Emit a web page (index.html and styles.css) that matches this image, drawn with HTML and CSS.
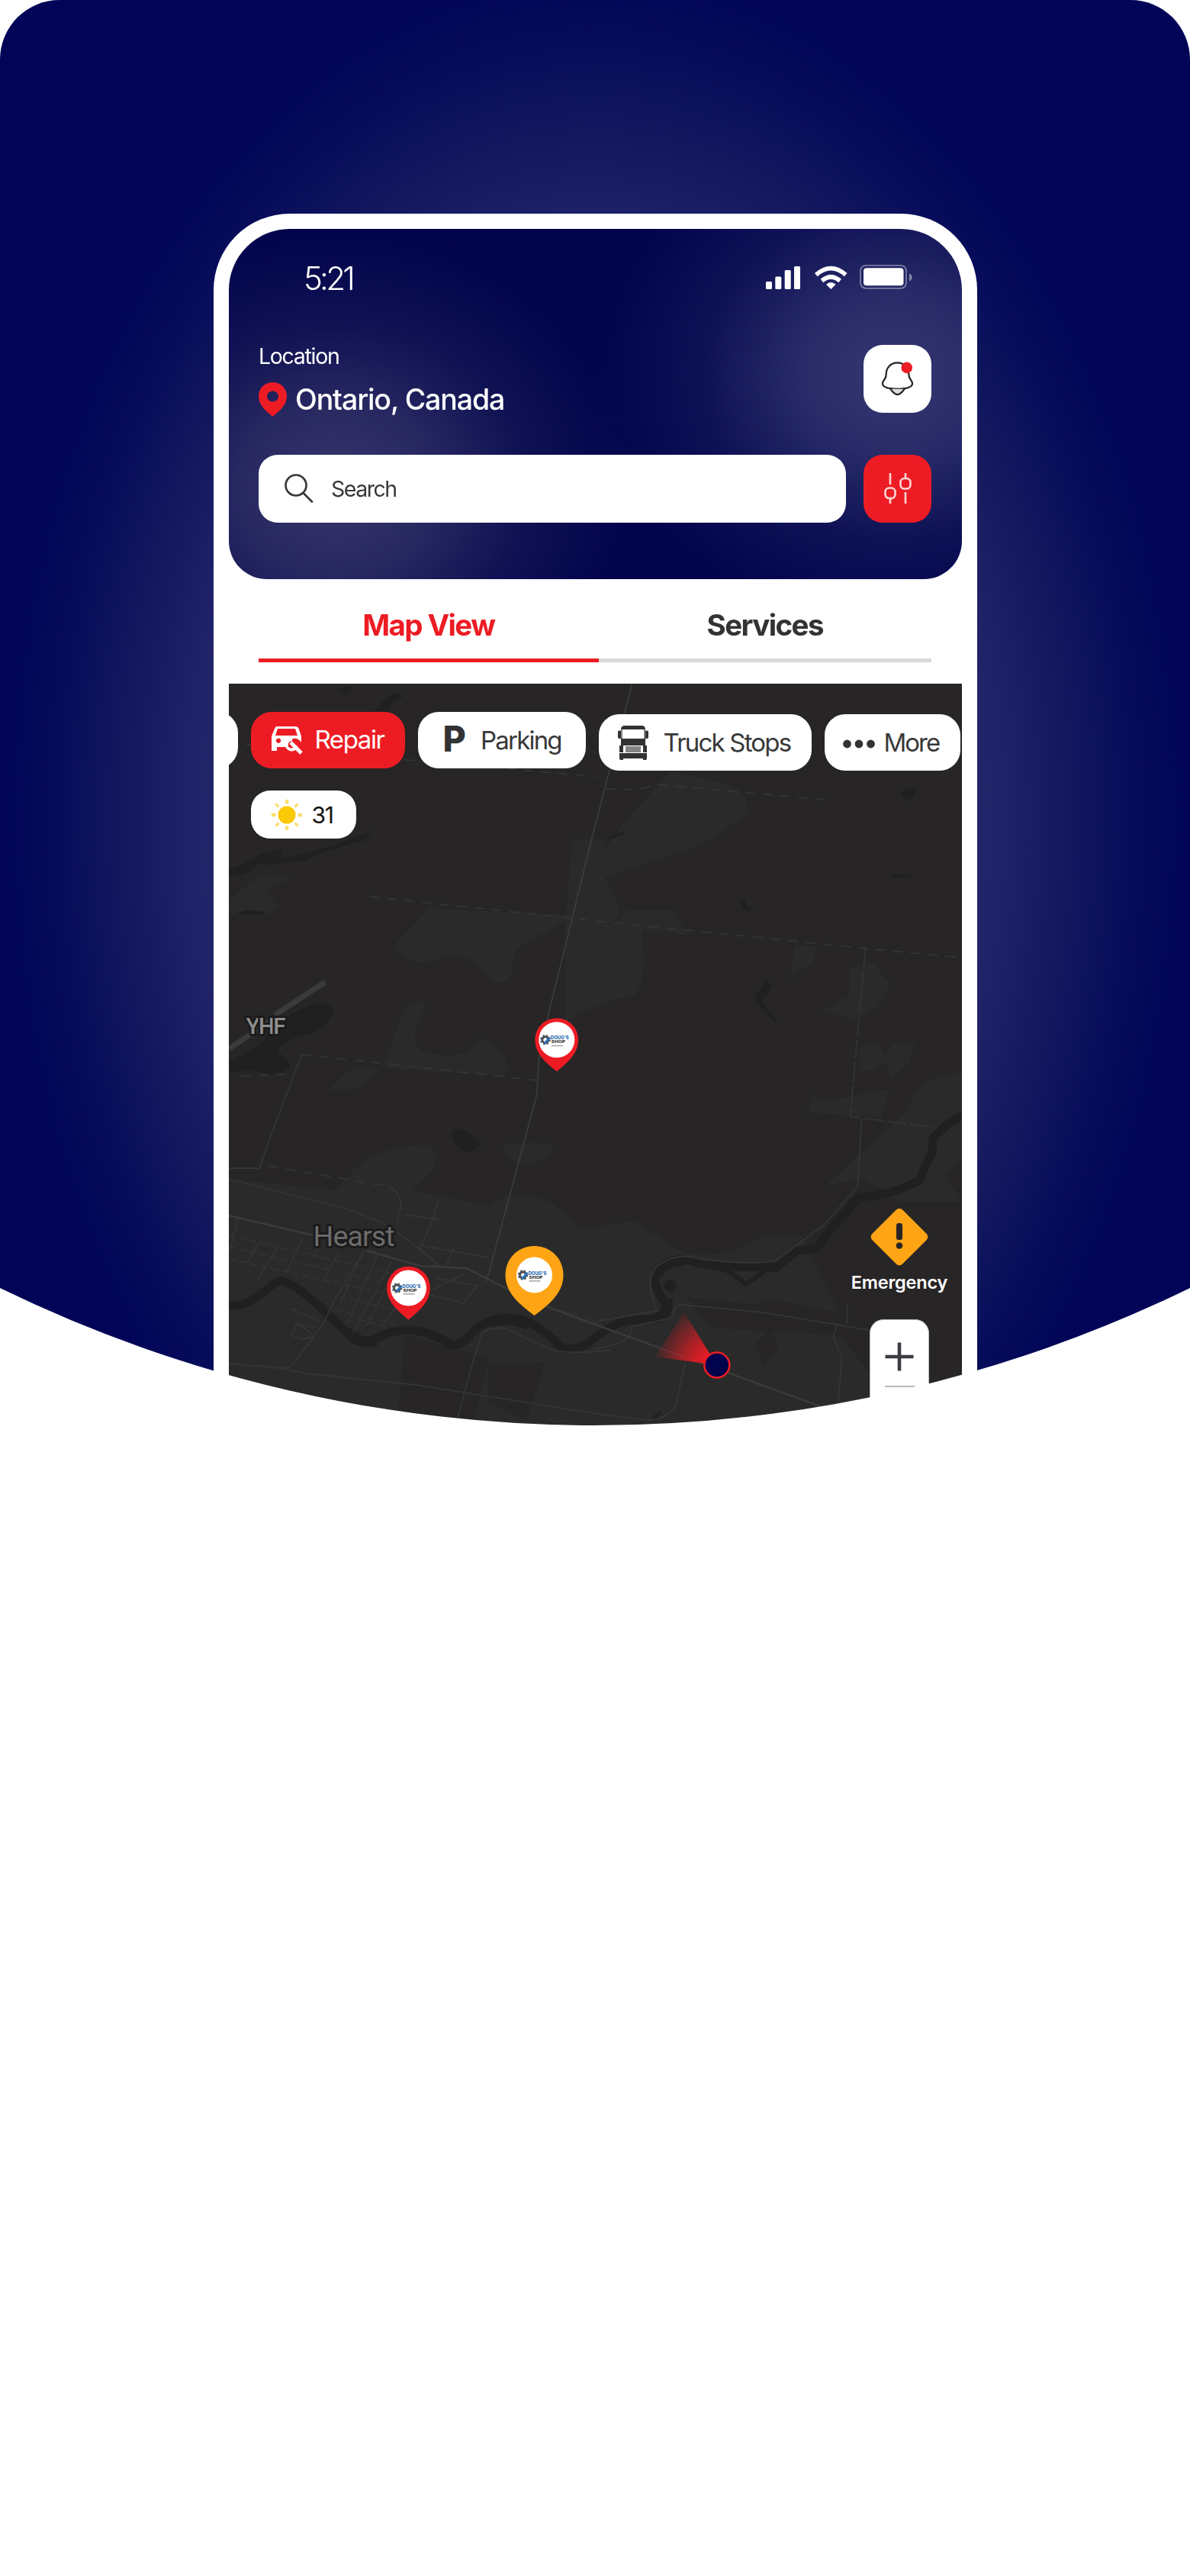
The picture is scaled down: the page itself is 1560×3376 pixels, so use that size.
FILE: index.html
```html
<!DOCTYPE html>
<html lang="en">
<head>
<meta charset="utf-8">
<title>Roadside Map</title>
<link rel="stylesheet" href="styles.css">
</head>
<body>
<main class="hero">
  <section class="phone">
    <div class="screen">
      <header class="header">
        <div class="status">
          <span class="clock">5:21</span>
          <svg class="status-icons" viewBox="1000 340 200 45" fill="#fff">
            <rect x="1004" y="369" width="8" height="10" rx="1.5"/>
            <rect x="1016.3" y="362.5" width="8" height="16.5" rx="1.5"/>
            <rect x="1028.7" y="354" width="8" height="25" rx="1.5"/>
            <rect x="1041" y="349" width="8" height="30" rx="1.5"/>
            <g fill="none" stroke="#fff" stroke-width="5.6">
              <path d="M1069.800 360.200Q1089.300 343.200 1108.700 360.200"/>
              <path d="M1077.400 368Q1089.300 358 1101.200 368"/>
            </g>
            <path d="M1089.300 379l-6.300-6.300q6.300-5.500 12.600 0z"/>
            <rect x="1128" y="347.800" width="60" height="30" rx="7" fill="none" stroke="#fff" stroke-opacity=".4" stroke-width="1.800"/>
            <rect x="1132" y="351.300" width="52.500" height="23" rx="4"/>
            <path d="M1192 358.500q3.600 1.500 3.600 5t-3.600 5z" fill-opacity=".45"/>
          </svg>
        </div>
        <div class="place-row">
          <div class="place">
            <span class="place-label">Location</span>
            <div class="place-name">
              <svg class="pin-icon" viewBox="0 0 37 45"><path fill="#ed1c24" fill-rule="evenodd" d="M18.500 0C8 0 0 8 0 18.500C0 29 8 36.500 18.500 45C29 36.500 37 29 37 18.500C37 8 29 0 18.500 0ZM18.500 11.500a7.500 7 0 1 1 0 14a7.500 7 0 1 1 0-14Z"/></svg>
              <span>Ontario, Canada</span>
            </div>
          </div>
          <button class="square bell" aria-label="Notifications">
            <svg viewBox="0 0 44 46" fill="none" stroke="#222" stroke-width="2.300">
              <path d="M22 1.500C13 1.500 6.800 8 6.800 17C6.800 25 2 24 2 29.500C2 35.500 12 36.500 22 36.500S42 35.500 42 29.500C42 24 37.200 25 37.200 17C37.200 8 31 1.500 22 1.500Z"/>
              <path d="M12.500 36.500c2.500 3.500 5 7.500 9.500 7.500s7-4 9.500-7.500" fill="#ddd"/>
              <circle cx="34.500" cy="8" r="7.500" fill="#ed1c24" stroke="none"/>
            </svg>
          </button>
        </div>
        <div class="search-row">
          <div class="search">
            <svg viewBox="0 0 38 38" fill="none" stroke="#383838" stroke-width="2.700" stroke-linecap="round"><circle cx="15" cy="15" r="13.500"/><path d="M24.500 25L36 36.500"/></svg>
            <span>Search</span>
          </div>
          <button class="square filter" aria-label="Filters">
            <svg viewBox="0 0 38 40" fill="none" stroke="#fff" stroke-opacity=".82" stroke-width="2.600"><path d="M9 0V15M9 34V40M29 0V6M29 25V40"/><rect x="2.500" y="19.500" width="13" height="13.500" rx="5"/><rect x="22.500" y="7" width="13" height="13.500" rx="5"/></svg>
          </button>
        </div>
      </header>

      <nav class="tabs">
        <a class="tab tab-active">Map View</a>
        <a class="tab">Services</a>
      </nav>

      <div class="map">
        <svg class="map-art" viewBox="299.500 896 961 972">
          <rect x="299" y="896" width="962" height="972" fill="#272526"/>
          <!-- woodland patches -->
          <g fill="#292a29">
            <path d="M820 1075L880 1010L960 1030Q1000 1060 960 1080Q920 1110 880 1120Q850 1130 790 1150L780 1130Z"/>
            <path d="M300 1180L340 1145L385 1150L350 1165L365 1190L350 1198H300Z"/>
            <path d="M515 1240L562 1190L755 1200L690 1235Q670 1245 672 1270Q660 1300 640 1280Q610 1240 570 1258Q540 1270 515 1240Z"/>
            <path d="M750 1100H792V1150Q830 1210 790 1210H840Q850 1290 830 1305Q790 1310 740 1340V1210Z"/>
            <path d="M530 1320Q560 1300 555 1325Q530 1370 560 1380Q620 1390 625 1360Q660 1370 667 1400L660 1410L500 1400L465 1428H430L460 1400H500Z"/>
            <path d="M820 1193H882L902 1225L800 1215ZM1040 1238L1070 1240L1065 1262L1037 1280ZM1112 1268L1145 1262L1166 1290L1150 1320L1120 1337L1077 1325L1113 1305ZM1127 1370H1150L1160 1385L1170 1367H1199L1190 1395L1168 1415L1160 1392L1145 1402H1127Z"/>
            <path d="M1065 1435L1075 1445L1165 1427L1155 1465L1058 1458ZM1190 1455Q1200 1410 1261 1405V1520L1240 1540L1261 1575H1180L1130 1545L1080 1555L1140 1500Z"/>
            <path d="M300 1545L440 1560Q480 1500 560 1500Q590 1520 540 1560L640 1580Q700 1540 760 1610L830 1600L885 1635Q930 1660 1000 1620L1050 1620L1100 1720L1000 1700L990 1710L900 1700L930 1740L1100 1750L1140 1800V1868H300ZM660 1500Q740 1490 720 1515Q680 1540 660 1510Z"/>
          </g>
          <g fill="#272526"><path d="M530 1750L640 1780L620 1868H520ZM640 1790L715 1785L690 1860L640 1840ZM990 1760L1010 1740L1020 1770L1000 1790Z"/></g>
          <!-- lakes and rivers -->
          <g fill="#1f201f">
            <path d="M441 903L462 899L460 905L452 911ZM490 932L505 915Q525 903 527 914L515 918L510 932Z"/>
            <path d="M300 1140Q325 1130 340 1120Q360 1115 368 1112L370 1125Q420 1115 450 1103L485 1090L479 1101Q430 1112 400 1128L370 1130L350 1134L342 1130L330 1140Q315 1150 300 1147Z"/>
            <path d="M310 1197L325 1192L345 1195V1199H325ZM795 1097L815 1090L820 1088L818 1093L800 1100Z"/>
            <path d="M300 1392L340 1370L358 1345Q390 1320 420 1315Q440 1318 436 1327Q425 1350 400 1357Q375 1360 362 1378Q380 1388 380 1398Q370 1408 350 1407L330 1402L300 1406Z"/>
            <path d="M591 1482Q600 1476 618 1488L630 1499Q620 1511 610 1510Q592 1500 591 1482ZM1186 1035L1200 1031L1201 1037L1192 1049L1180 1042ZM970 1177L975 1178L980 1189H987L980 1195L973 1192ZM1169 1145L1194 1146V1151L1170 1149Z"/>
            <path d="M1003 1285L1012 1292L998 1312L1017 1336L1015 1339L992 1315L989 1307Z"/>
            <circle cx="878" cy="1685" r="8"/><path d="M853 1858L866 1848V1853L857 1863Z"/>
          </g>
          <g fill="none" stroke="#1f201f" stroke-width="9" stroke-linejoin="round">
            <path d="M299 1711Q320 1713 340 1697T366 1678Q388 1682 432 1725L458 1750Q470 1762 485 1758Q512 1742 537 1743T592 1763Q605 1764 620 1745Q638 1727 675 1728Q700 1730 735 1765Q750 1771 768 1762Q785 1747 810 1734Q835 1728 858 1729Q880 1720 870 1705Q852 1680 862 1665Q873 1645 918 1655L960 1660L1017 1661L1045 1639L1070 1637L1085 1615L1125 1570L1150 1566Q1190 1558 1206 1545L1212 1528L1222 1510V1494Q1235 1475 1261 1462" stroke-width="11"/>
            <path d="M910 1657L953 1665L978 1683L1010 1660" stroke-width="6"/>
            <path d="M455 1746Q475 1764 492 1757M640 1733Q665 1724 692 1736M862 1672Q865 1653 895 1652M860 1728Q877 1722 874 1702" stroke-width="14"/>
          </g>
          <!-- roads -->
          <g fill="none" stroke="#343534" stroke-width="1.800">
            <path d="M828 896L775 1100L730 1283Q716 1335 706 1390L704 1420Q703 1440 699 1450L640 1670L635 1680" stroke="#3a3b3a"/>
            <path stroke-dasharray="13 10" d="M484 1175L792 1208L1134 1243L1259 1255M395 1382L705 1416M315 1410L380 1408M352 1528L490 1552L510 1554M794 1034L835 1035L860 1028L1080 1048M640 1005L780 1018M300 976H340M530 996L590 999"/>
            <path d="M1134 1243L1114 1463L1225 1478" stroke-dasharray="25 5"/><path d="M1129 1466L1124 1555L1080 1605L1020 1650Q1000 1660 918 1650Q885 1640 860 1660Q844 1680 861 1718L780 1732M895 1710L1000 1720L1150 1745M1097 1735L1092 1752L1103 1780L1098 1845M1110 1710V1736M895 1710Q880 1710 882 1726L855 1733L828 1738Q830 1760 780 1768"/>
            <path d="M395 1382L350 1500L340 1531H300M510 1554Q525 1566 525 1580L520 1602M300 1545L380 1566L450 1583L500 1602L530 1622L575 1658"/>
            <path stroke="#3a3b3a" stroke-width="2.500" d="M299 1593L410 1619M480 1639L550 1659L611 1662L650 1682L700 1706L780 1736L1080 1845"/>
            <path d="M477 1640L440 1700L423 1735L386 1785Q380 1795 367 1793L300 1787M367 1793L400 1800L545 1815L790 1854L850 1861Q875 1860 886 1840L898 1785M600 1857L615 1800L630 1750Q635 1740 660 1740L720 1768Q745 1776 800 1769"/>
            <path d="M574 1574L568 1596L550 1636L575 1660M530 1592L575 1598M595 1635L585 1658M550 1632L640 1648M608 1669L568 1690M570 1675L625 1685L607 1708L560 1696M380 1715L420 1732M390 1735L410 1740M381 1750L389 1735L405 1745L410 1752L397 1755Z"/>
            <path stroke-width="1.500" d="M312 1596L300 1640M340 1627L323 1655M364 1634L338 1676M397 1622L374 1669M420 1626L412 1648M444 1640L423 1680M475 1640L445 1710M495 1643L455 1735M515 1650L462 1747M505 1688L480 1738M530 1700L500 1738"/>
            <path stroke-width="1.500" stroke-dasharray="9 5" d="M300 1619L520 1671M300 1634L500 1680M300 1650L510 1697M445 1700L520 1717M440 1716L515 1735M470 1729L510 1740M455 1625L500 1645"/>
            <path stroke-width="4" stroke-dasharray="1.500 4" d="M740 1718L790 1737"/>
          </g>
          <path d="M299 1375L355 1337M360 1330L426 1287" stroke="#3b3b3b" stroke-width="7" fill="none"/>
          <g class="labels">
            <text class="airport" x="322" y="1355" textLength="52">YHF</text>
            <text class="town" x="410" y="1633" textLength="107">Hearst</text>
          </g>

          <!-- heading and current position -->
          <defs>
            <radialGradient id="beam" gradientUnits="userSpaceOnUse" cx="939" cy="1789" r="86"><stop offset=".15" stop-color="#ed1c24"/><stop offset=".45" stop-color="#ed1c24" stop-opacity=".7"/><stop offset="1" stop-color="#ed1c24" stop-opacity="0"/></radialGradient>
            <g id="badge">
              <circle r="23.500" fill="#fff"/>
              <circle cx="-15" cy="0" r="4" fill="none" stroke="#4a5056" stroke-width="3"/>
              <circle cx="-15" cy="0" r="6" fill="none" stroke="#4a5056" stroke-width="1.600" stroke-dasharray="2.400 2.400"/>
              <path d="M-16 5L-9 -3" stroke="#2a72b8" stroke-width="3"/>
              <text class="brand" x="-8" y="-.5" textLength="24" lengthAdjust="spacingAndGlyphs">DOUG'S</text>
              <text class="brand brand-sub" x="-7" y="4.600" textLength="18" lengthAdjust="spacingAndGlyphs">SHOP</text>
              <path d="M-7 7.800H8" stroke="#aaa" stroke-width="1.600"/>
            </g>
            <path id="marker" d="M0-28.300C-16-28.300-28.300-16-28.300 0C-28.300 18-15 29 0 41.500C15 29 28.300 18 28.300 0C28.300-16 16-28.300 0-28.300Z"/>
          </defs>
          <path d="M939 1789L857 1778Q878 1750 896 1719Z" fill="url(#beam)"/>
          <circle cx="939.300" cy="1789" r="16.500" fill="#00034c" stroke="#ed1c24" stroke-width="2.600"/>

          <g transform="translate(729.300 1362.700)"><use href="#marker" fill="#ed1c24"/><use href="#badge"/></g>
          <g transform="translate(535 1688)"><use href="#marker" fill="#ed1c24"/><use href="#badge"/></g>
          <g transform="translate(700 1671)"><path fill="#ffa415" d="M0-38C-22-38-38-21-38 0C-38 22-22 37 0 53C22 37 38 22 38 0C38-21 22-38 0-38Z"/><use href="#badge"/></g>
        </svg>

        <div class="overlay">
          <div class="chips">
            <span class="chip chip-cut"></span>
            <span class="chip chip-repair">
              <svg viewBox="0 0 42 40"><path fill="#fff" fill-rule="evenodd" d="M7 1H31Q35 1 36 5L39 14V22Q33 14 26 18Q21 21 21 28H7V33H0V14L4 4Q5 1 7 1ZM8 4L5 13H34L31 4ZM9 16.500a3.200 3.200 0 1 0 .1 0Z"/><path d="M25 22L39 36" stroke="#fff" stroke-width="5"/><path d="M27 18.500a6.500 6.500 0 1 0 5.500 8" fill="none" stroke="#fff" stroke-width="4"/></svg>
              Repair
            </span>
            <span class="chip chip-parking"><b>P</b>Parking</span>
            <span class="chip chip-truck">
              <svg viewBox="0 0 40 46"><g fill="#333"><path d="M9 1H31Q36 1 36 6H4Q4 1 9 1Z"/><path d="M0 9Q0 7.500 2 7.500H4V18H2Q0 18 0 16ZM36 7.500H38Q40 7.500 40 9V16Q40 18 38 18H36Z"/><path d="M4 18H36V27H4Z"/><path d="M2 27H7V36H2ZM33 27H38V36H33ZM2 37H38V44Q38 46 36 46H33V44H7V46H4Q2 46 2 44Z"/></g><path fill="#858585" d="M10 28H30V36H10ZM4 6H6V18H4ZM34 6H36V18H34Z"/></svg>
              Truck Stops
            </span>
            <span class="chip chip-more"><svg viewBox="0 0 42 12" fill="#333"><circle cx="5.500" cy="6" r="5.400"/><circle cx="21" cy="6" r="5.400"/><circle cx="36.500" cy="6" r="5.400"/></svg>More</span>
          </div>
          <div class="weather">
            <svg viewBox="-20 -20 40 40"><circle r="11.500" fill="#fbc906"/><g stroke="#fbdd74" stroke-width="4.500"><path d="M0-20V-14.500M0 14.500V20M-20 0H-14.500M14.500 0H20"/><path stroke-width="3.200" d="M-14.500-14.500L-10.500-10.500M14.500-14.500L10.500-10.500M-14.500 14.500L-10.500 10.500M14.500 14.500L10.500 10.500"/></g></svg>
            31
          </div>
          <div class="side">
            <svg class="alert" viewBox="-37 -37 74 74"><rect x="-28" y="-28" width="56" height="56" rx="5.500" transform="rotate(45)" fill="#ffa415"/><rect x="-4" y="-18" width="8" height="22" rx="3" fill="#272526"/><circle cy="11.500" r="4.300" fill="#272526"/></svg>
            <span class="alert-label">Emergency</span>
            <div class="zoom">
              <svg viewBox="0 0 38 38" stroke="#3c3c43" stroke-width="4.600"><path d="M19 .5V37.500M.5 19H37.500"/></svg>
              <i></i>
            </div>
          </div>
        </div>
      </div>
    </div>
  </section>
</main>
</body>
</html>
```
FILE: styles.css
```css
* { box-sizing: border-box; }
body { margin: 0; background: #fff; min-height: 3376px; font-family: Inter, "Liberation Sans", sans-serif; }
svg { display: block; flex: none; overflow: visible; }
button { border: 0; padding: 0; font: inherit; }

.hero {
  width: 1560px;
  height: 1868px;
  padding: 280px 0 0 279.5px;
  background: radial-gradient(ellipse 780px 1120px at 780px 1070px, #2b2f70 0%, #242869 60%, #1f2268 69%, #13185f 79%, #070d5a 90%, #000457 100%);
  clip-path: path("M0 78A78 78 0 0 1 78 0H1482A78 78 0 0 1 1560 78V1688A1780 1780 0 0 1 0 1688Z");
  /* composite as one layer so the curved edge stays clean */
  opacity: .999;
}
.phone { width: 1001px; height: 1588px; padding: 20px 20px 0; background: #fff; border-radius: 100px 100px 0 0; }
.screen { width: 961px; height: 1568px; border-radius: 80px 80px 0 0; overflow: hidden; background: #fff; }

.header {
  height: 458.5px;
  padding: 42px 39.5px 0;
  border-radius: 0 0 50px 50px;
  color: #fff;
  background:
    radial-gradient(ellipse 400px 350px at 140px 340px, #37376b 0%, rgba(48, 48, 102, .85) 30%, rgba(30, 32, 90, .5) 62%, rgba(0, 3, 75, 0) 100%),
    radial-gradient(ellipse 400px 350px at 870px 190px, #34376f 0%, rgba(46, 49, 108, .88) 30%, rgba(28, 32, 95, .5) 62%, rgba(0, 3, 75, 0) 100%),
    #00034b;
}
.status { display: flex; justify-content: space-between; align-items: center; height: 45px; padding: 0 21px 0 59px; }
.clock { font-size: 42px; font-weight: 300; letter-spacing: -3.8px; line-height: 45px; }
.status-icons { width: 200px; height: 45px; position: relative; top: -2px; }
.place-row { display: flex; justify-content: space-between; margin-top: 65px; height: 89px; }
.place-label { display: block; font-size: 28.5px; line-height: 30px; letter-spacing: -1.3px; }
.place-name { display: flex; align-items: center; gap: 11px; margin-top: 19px; height: 45px; font-size: 37.5px; font-weight: 500; letter-spacing: -1.1px; }
.pin-icon { width: 37px; height: 45px; }
.square { width: 89px; height: 89px; border-radius: 25px; display: grid; place-items: center; }
.bell { background: #fff; }
.bell svg { width: 43px; height: 45px; }
.filter { background: #ed1c24; }
.filter svg { width: 38px; height: 40px; }
.search-row { display: flex; justify-content: space-between; margin-top: 54.5px; }
.search { width: 769.5px; height: 89px; padding-left: 34px; display: flex; align-items: center; gap: 23px; background: #fff; border-radius: 25px; color: #383838; font-size: 28.5px; letter-spacing: -1.5px; }
.search svg { width: 38px; height: 38px; }

.tabs { display: flex; height: 137.500px; padding: 27px 39.5px 28.5px; }
.tab { flex: 0 0 436.5px; border-bottom: 5.5px solid #d9d9d9; color: #333; text-align: center; font-size: 38.5px; font-weight: 700; line-height: 66px; letter-spacing: -1.6px; }
.tab-active { flex-basis: 445.5px; border-color: #ed1c24; color: #ed1c24; }

.map { position: relative; height: 972px; }
.map-art { width: 961px; height: 972px; }
.labels text { paint-order: stroke; stroke: #1b1b1b; stroke-width: 6px; stroke-linejoin: round; font-family: Roboto, sans-serif; }
.airport { font-size: 29.5px; font-weight: 500; fill: #8f8f8f; }
.town { font-size: 37.5px; fill: #6c6c6c; }
.brand { font: 800 6.5px Inter, sans-serif; fill: #2a6db0; }
.brand-sub { font-size: 5px; fill: #333; }

.overlay { position: absolute; inset: 0; }
.chips { display: flex; gap: 17px; padding-top: 37px; margin-left: -46px; }
.chip { flex: none; height: 74px; border-radius: 27px; background: #fff; color: #383838; display: flex; align-items: center; font-size: 33px; font-weight: 400; letter-spacing: -1.6px; }
.chip-cut { width: 58px; }
.chip-repair { width: 202px; padding-left: 27px; gap: 15px; background: #ed1c24; color: #fff; padding-bottom: 3px; letter-spacing: -1.4px; }
.chip-repair svg { width: 42px; height: 40px; margin-top: 5px; }
.chip-parking { width: 220px; padding-left: 33px; gap: 21px; letter-spacing: -1.8px; }
.chip-parking b { font-size: 46.5px; font-weight: 800; line-height: 1; margin-top: -3px; color: #333; }
.chip-truck { width: 279px; margin-top: 2.5px; padding-left: 25px; gap: 20px; letter-spacing: -1.8px; }
.chip-truck svg { width: 40px; height: 46px; }
.chip-more { width: 178px; margin-top: 2.5px; padding-left: 24px; gap: 12px; letter-spacing: -2px; }
.chip-more svg { width: 42px; height: 12px; margin-top: 5px; }
.weather { width: 138px; height: 62.500px; margin: 26.5px 0 0 29.5px; padding: 2px 0 0 27px; border-radius: 25px; background: #fff; display: flex; align-items: center; gap: 12.5px; font-size: 30px; letter-spacing: -1.3px; color: #111; }
.weather svg { width: 40px; height: 40px; }
.side { position: absolute; right: 8px; top: 687.5px; width: 147px; display: flex; flex-direction: column; align-items: center; }
.alert { width: 74px; height: 74px; }
.alert-label { margin-top: 8px; color: #fff; font-size: 23.500px; font-weight: 600; line-height: 30px; letter-spacing: -.2px; }
.zoom { width: 78px; height: 260px; margin-top: 33px; padding-top: 29px; border-radius: 18px; border: 1.5px solid #b9bac6; background: #fff; display: flex; flex-direction: column; align-items: center; gap: 19px; }
.zoom svg { width: 38px; height: 38px; }
.zoom i { width: 39px; height: 2px; background: #b5b9c0; }
```
